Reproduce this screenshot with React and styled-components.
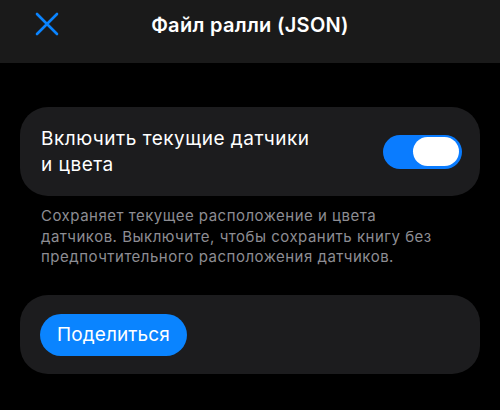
import React, { useState } from "react";
import styled, { createGlobalStyle } from "styled-components";

const GlobalStyle = createGlobalStyle`
  html, body {
    margin: 0;
    padding: 0;
    background: #000;
  }
  body {
    font-family: Inter, "Noto Sans", "Liberation Sans", sans-serif;
    -webkit-font-smoothing: antialiased;
  }
`;

const App = () => {
  const [keepLayout, setKeepLayout] = useState(true);

  return (
    <>
      <GlobalStyle />
      <StPage>
        <StHeader>
          <StCloseButton aria-label="Закрыть">
            <svg width="24" height="24" viewBox="0 0 24 24">
              <path
                d="M2 2 L22 22 M22 2 L2 22"
                stroke="#0a84ff"
                strokeWidth="2.6"
                strokeLinecap="round"
              />
            </svg>
          </StCloseButton>
          <StTitle>Файл ралли (JSON)</StTitle>
        </StHeader>

        <StContent>
          <StCard>
            <StToggleRow>
              <StLabel>
                Включить текущие датчики
                <br />и цвета
              </StLabel>
              <StSwitch
                $on={keepLayout}
                onClick={() => setKeepLayout(!keepLayout)}
              >
                <StKnob $on={keepLayout} />
              </StSwitch>
            </StToggleRow>
          </StCard>
          <StFootnote>
            Сохраняет текущее расположение и цвета
            <br />
            датчиков. Выключите, чтобы сохранить книгу без
            <br />
            предпочтительного расположения датчиков.
          </StFootnote>

          <StCard>
            <StButtonRow>
              <StShareButton>Поделиться</StShareButton>
            </StButtonRow>
          </StCard>
        </StContent>
      </StPage>
    </>
  );
};

export default App;

// styled-components
const StPage = styled.div`
  width: 500px;
  height: 410px;
  background: #000;
  overflow: hidden;
`;

const StHeader = styled.header`
  position: relative;
  height: 63px;
  background: #1a1a1a;
  display: flex;
  align-items: center;
  justify-content: center;
  padding-bottom: 13px;
  box-sizing: border-box;
`;

const StCloseButton = styled.button`
  position: absolute;
  left: 35px;
  top: 12px;
  width: 24px;
  height: 24px;
  padding: 0;
  border: none;
  background: none;
  display: flex;
`;

const StTitle = styled.h1`
  margin: 0;
  font-size: 20px;
  font-weight: 600;
  color: #fff;
  letter-spacing: 0.3px;
`;

const StContent = styled.main`
  padding: 44px 20px 0;
  display: flex;
  flex-direction: column;
`;

const StCard = styled.section`
  background: #1c1c1e;
  border-radius: 28px;
`;

const StToggleRow = styled.div`
  height: 89px;
  padding: 0 18px 0 21px;
  display: flex;
  align-items: center;
  justify-content: space-between;
`;

const StLabel = styled.span`
  font-size: 19px;
  line-height: 26px;
  letter-spacing: 0.5px;
  color: #fff;
`;

const StSwitch = styled.div`
  width: 79px;
  height: 34px;
  border-radius: 17px;
  background: ${({ $on }) => ($on ? "#0a7cff" : "#39393d")};
  display: flex;
  align-items: center;
  justify-content: ${({ $on }) => ($on ? "flex-end" : "flex-start")};
  padding: 0 3px;
  box-sizing: border-box;
  cursor: pointer;
`;

const StKnob = styled.div`
  width: 46px;
  height: 29px;
  border-radius: 15px;
  background: #fff;
`;

const StFootnote = styled.p`
  margin: 10px 0 0;
  padding: 0 21px;
  height: 89px;
  font-size: 15px;
  line-height: 20.5px;
  letter-spacing: 0.5px;
  color: #8d8d93;
`;

const StButtonRow = styled.div`
  height: 79px;
  padding: 0 20px;
  display: flex;
  align-items: center;
`;

const StShareButton = styled.button`
  height: 42px;
  padding: 0 17px;
  border: none;
  border-radius: 21px;
  background: #0a84ff;
  color: #fff;
  font-family: inherit;
  font-size: 19px;
  letter-spacing: 0.1px;
  cursor: pointer;
`;
